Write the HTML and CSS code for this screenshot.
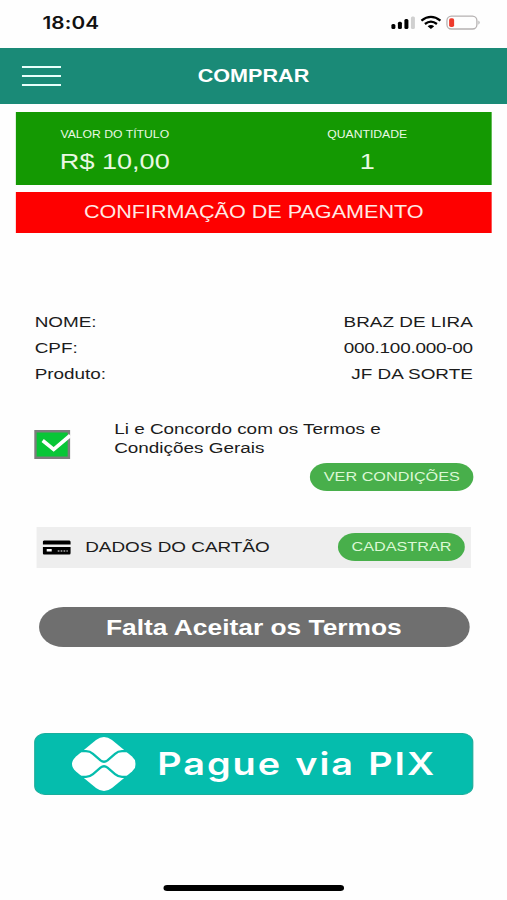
FILE: index.html
```html
<!DOCTYPE html>
<html lang="pt-BR">
<head>
<meta charset="utf-8">
<title>Comprar</title>
<link rel="stylesheet" href="styles.css">
</head>
<body>
<div class="screen">
  <div class="status">
    <span class="clock">18:04</span>
    <svg class="status-icons" viewBox="0 0 90 16" preserveAspectRatio="none">
      <rect x="1" y="9" width="4" height="5" rx="1.5"/>
      <rect x="7.5" y="6.800" width="4" height="7.200" rx="1.500"/>
      <rect x="14" y="4" width="4" height="10" rx="1.5"/>
      <rect x="20.500" y="1.500" width="4" height="12.500" rx="1.500" fill="#d0d0d0"/>
      <g fill="none" stroke="#000" stroke-width="2.300">
        <path d="M31 5.600Q40.500 -1.800 50 5.600"/>
        <path d="M34.500 9Q40.500 4.300 46.500 9"/>
      </g>
      <path d="M37.200 11.300Q40.500 8.900 43.800 11.300L40.500 14Z"/>
      <rect x="56.500" y="1.200" width="30" height="12.800" rx="4.500" fill="none" stroke="#b5b1b1" stroke-width="1.300"/>
      <rect x="58.700" y="3.200" width="5" height="8.800" rx="1.800" fill="#ee3a2c"/>
      <path d="M88 5.500Q90.500 7.500 88 9.700Z" fill="#aaa"/>
    </svg>
  </div>
  <header class="topbar">
    <div class="menu"><i></i><i></i><i></i></div>
    <h1>COMPRAR</h1>
  </header>
  <main>
    <section class="summary">
      <div class="cell"><small>VALOR DO TÍTULO</small><span>R$ 10,00</span></div>
      <div class="cell"><small>QUANTIDADE</small><span>1</span></div>
    </section>
    <div class="confirm">CONFIRMAÇÃO DE PAGAMENTO</div>
    <dl class="details">
      <div><dt>NOME:</dt><dd>BRAZ DE LIRA</dd></div>
      <div><dt>CPF:</dt><dd class="cpf">000.100.000-00</dd></div>
      <div><dt>Produto:</dt><dd>JF DA SORTE</dd></div>
    </dl>
    <section class="terms">
      <svg class="check" viewBox="0 0 36 29" preserveAspectRatio="none">
        <rect x="1.250" y="1.250" width="33.500" height="26.500" fill="#08c637" stroke="#7d7d7d" stroke-width="2.500"/>
        <path d="M8.500 10.500L19.500 19.300L36 5.500" fill="none" stroke="#fff" stroke-width="3.600"/>
      </svg>
      <p>Li e Concordo com os Termos e<br>Condições Gerais</p>
    </section>
    <div class="conditions"><a class="pill">VER CONDIÇÕES</a></div>
    <section class="card">
      <svg class="card-icon" viewBox="0 0 28 15" preserveAspectRatio="none">
        <path d="M0 4.500V2Q0 .5 1.500 .5H26.500Q28 .5 28 2V4.500ZM0 7H28V13Q28 14.500 26.500 14.500H1.500Q0 14.500 0 13Z"/>
        <path d="M4 9H9V11.500H4Z" fill="#fff"/>
        <path d="M15 11H25" stroke="#aaa" stroke-width="1.300" stroke-dasharray="1.700 1.200"/>
      </svg>
      <span>DADOS DO CARTÃO</span>
      <a class="pill register">CADASTRAR</a>
    </section>
    <div class="accept">Falta Aceitar os Termos</div>
    <div class="pix">
      <svg class="pix-logo" viewBox="0 0 64 54" preserveAspectRatio="none">
        <path fill="#fff" d="M24 3Q32 -3 40 3L60 19.500Q68 27 60 34.500L40 51Q32 57 24 51L4 34.500Q-4 27 4 19.500Z"/>
        <g fill="none" stroke="#05bdad" stroke-width="2.300">
          <path d="M8 14.200H14Q18 14.200 21 16.800L28.500 23.300Q32 26.200 35.500 23.300L43 16.800Q46 14.200 50 14.200H56"/>
          <path d="M8 39.800H14Q18 39.800 21 37.200L28.500 30.700Q32 27.800 35.500 30.700L43 37.200Q46 39.800 50 39.800H56"/>
        </g>
      </svg>
      <span>Pague via PIX</span>
    </div>
  </main>
  <div class="home"></div>
</div>
</body>
</html>
```
FILE: styles.css
```css
* { box-sizing: border-box; }
html, body { margin: 0; background: #fefefe; overflow: hidden; }
/* The layout is 415.57px wide and stretched to the window's 507px. */
.screen {
  width: 415.57px;
  height: 900px;
  display: flex;
  flex-direction: column;
  transform: scaleX(1.22);
  transform-origin: 0 0;
  font-family: "Liberation Sans", Arial, sans-serif;
  font-size: 15.5px;
  color: #1c1c1c;
}
.status {
  height: 48px;
  flex: none;
  display: flex;
  justify-content: space-between;
  align-items: flex-start;
  padding: 15px 21.500px 0 34.800px;
}
.clock { font: 600 17px/16px Inter, sans-serif; letter-spacing: .1px; color: #111; }
.status-icons { width: 73.800px; height: 16px; }
.topbar {
  height: 55.500px;
  flex: none;
  display: grid;
  grid-template-columns: 50px 1fr 50px;
  align-items: center;
  padding-left: 18px;
  padding-right: 18px;
  background: #1a8a77;
  color: #fff;
}
.menu { width: 32px; display: grid; gap: 6.800px; }
.menu i { height: 2.200px; background: #e8fffb; }
h1 { margin: 0; font-size: 17.700px; line-height: 20px; text-align: center; }
main { flex: 1; padding: 8px 12.700px 0 13.100px; }
.summary {
  height: 73px;
  display: grid;
  grid-template-columns: 162px 1fr;
  background: #149902;
  color: #e9f8e2;
  padding-top: 17px;
}
.cell { display: flex; flex-direction: column; align-items: center; }
.cell + .cell { padding-left: 24px; }
.cell small { font-size: 10px; line-height: 12px; }
.cell span { font-size: 22.200px; line-height: 26px; margin-top: 8px; }
.confirm {
  height: 41px;
  margin-top: 7px;
  background: #fe0000;
  color: #ffe9e4;
  font-size: 17.700px;
  line-height: 41px;
  text-align: center;
}
.details { margin: 76px 15.300px 0; }
.details div { display: flex; justify-content: space-between; height: 26px; line-height: 26px; }
.details dd { margin: 0; }
.details .cpf { letter-spacing: -.2px; }
.terms { display: flex; align-items: flex-start; margin: 32px 0 0 15.300px; height: 44px; }
.check { width: 29.500px; height: 29px; margin-top: 11px; }
.terms p { margin: 0 0 0 35.700px; line-height: 19px; }
.conditions { display: flex; justify-content: flex-end; padding-right: 14.700px; }
.pill {
  width: 134px;
  height: 28px;
  border-radius: 14px;
  background: #48af4b;
  color: #dcf8d5;
  font-size: 13.300px;
  line-height: 28px;
  text-align: center;
}
.card {
  display: flex;
  align-items: center;
  height: 41px;
  margin: 36px 17.300px 0 17.200px;
  padding: 0 4.500px;
  background: #eee;
}
.card-icon { width: 23px; height: 15px; margin-right: 12px; }
.register { width: 104px; margin-left: auto; }
.accept {
  height: 40px;
  margin: 39px 18.300px 0 18.500px;
  border-radius: 20px;
  background: #6f6f6f;
  color: #fff;
  font-weight: bold;
  font-size: 21.600px;
  line-height: 41px;
  text-align: center;
}
.pix {
  display: flex;
  align-items: center;
  height: 62px;
  margin: 86px 14.700px 0 14.800px;
  padding-left: 30px;
  border: 1.500px solid #1bae9c;
  border-radius: 9px;
  background: #05bdad;
  color: #fff;
}
.pix-logo { width: 52.500px; height: 54px; flex: none; }
.pix span { margin-left: 17.500px; font: 600 31px/60px Inter, sans-serif; letter-spacing: 1.600px; word-spacing: 1.500px; white-space: nowrap; }
.home { flex: none; width: 148px; height: 6px; border-radius: 3px; background: #000; margin: 0 auto 9px; }
```
